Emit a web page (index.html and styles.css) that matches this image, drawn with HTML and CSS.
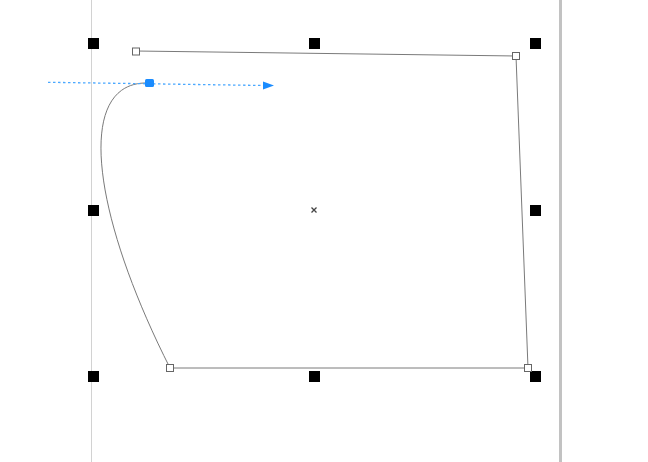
FILE: index.html
```html
<!DOCTYPE html>
<html>
<head>
<meta charset="utf-8">
<link rel="stylesheet" href="styles.css">
</head>
<body>
<div class="canvas">
  <svg class="board" width="648" height="462" viewBox="0 0 648 462" xmlns="http://www.w3.org/2000/svg">
    <line class="guide" x1="91.5" y1="0" x2="91.5" y2="462"/>
    <rect class="edge-bar" x="559" y="0" width="3" height="462"/>

    <path class="shape" d="M149,83 C75,80 90,210 170,368 L528,368 L516,56 L136,51"/>

    <line class="dash" x1="48" y1="82.3" x2="264" y2="85.5"/>
    <polygon class="arrow" points="263,81.5 274,85.6 263,89.5"/>

    <rect class="handle" x="88" y="38" width="11" height="11"/>
    <rect class="handle" x="309" y="38" width="11" height="11"/>
    <rect class="handle" x="530" y="38" width="11" height="11"/>
    <rect class="handle" x="88" y="205" width="11" height="11"/>
    <rect class="handle" x="530" y="205" width="11" height="11"/>
    <rect class="handle" x="88" y="371" width="11" height="11"/>
    <rect class="handle" x="309" y="371" width="11" height="11"/>
    <rect class="handle" x="530" y="371" width="11" height="11"/>

    <rect class="node" x="132.5" y="48" width="7" height="7"/>
    <rect class="node" x="512.5" y="52.5" width="7" height="7"/>
    <rect class="node" x="166.5" y="364.5" width="7" height="7"/>
    <rect class="node" x="524.5" y="364.5" width="7" height="7"/>

    <rect class="active" x="145" y="79" width="9" height="8" rx="1.5"/>

    <path class="center" d="M311.5,207.5 L316.5,212.5 M316.5,207.5 L311.5,212.5"/>
  </svg>
</div>
</body>
</html>
```
FILE: styles.css
```css
html, body {
  margin: 0;
  padding: 0;
  background: #ffffff;
}
.canvas {
  width: 648px;
  height: 462px;
  overflow: hidden;
}
.board {
  display: block;
}
.guide {
  stroke: #d2d2d2;
  stroke-width: 1;
}
.edge-bar {
  fill: #c2c2c2;
}
.shape {
  fill: none;
  stroke: #7a7a7a;
  stroke-width: 1;
}
.dash {
  stroke: #4aa8ff;
  stroke-width: 1.3;
  stroke-dasharray: 2.5 2.5;
}
.arrow {
  fill: #1a8cff;
}
.handle {
  fill: #000000;
}
.node {
  fill: #ffffff;
  stroke: #666666;
  stroke-width: 1;
}
.active {
  fill: #1a8cff;
}
.center {
  stroke: #444444;
  stroke-width: 1.3;
  fill: none;
}
```
